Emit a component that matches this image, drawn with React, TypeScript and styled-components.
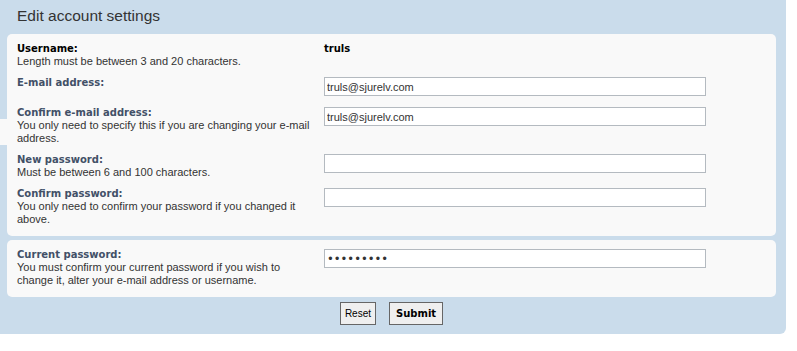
import styled, { createGlobalStyle } from 'styled-components';

const GlobalStyle = createGlobalStyle`
  body {
    margin: 0;
    background: #fff;
  }
`;

const Panel = styled.form`
  box-sizing: border-box;
  width: 786px;
  padding: 7px 10px 9px 7px;
  background: #cadceb;
  border-radius: 0 0 6px 0;
`;

const Title = styled.h2`
  margin: 0 0 9px;
  padding-left: 10px;
  font-family: 'Liberation Sans', Arial, sans-serif;
  font-size: 15.5px;
  font-weight: normal;
  line-height: 18px;
  color: #333;
`;

const Fieldset = styled.div<{ $top?: number }>`
  display: grid;
  row-gap: 9px;
  margin-top: ${(p) => p.$top ?? 0}px;
  padding: 9px 10px 10px;
  background: #f9f9f9;
  border-radius: 5px;
`;

const Row = styled.div`
  display: grid;
  grid-template-columns: 307px 1fr;
  align-items: start;
`;

const Term = styled.div`
  display: flex;
  flex-direction: column;
  max-width: 298px;
`;

const Label = styled.label<{ $plain?: boolean }>`
  font-family: 'DejaVu Sans', Verdana, sans-serif;
  font-size: 10px;
  font-weight: bold;
  line-height: 12px;
  color: ${(p) => (p.$plain ? '#000' : '#425067')};
`;

const Hint = styled.span<{ $bleed?: boolean }>`
  display: block;
  font-family: 'Liberation Sans', Arial, sans-serif;
  font-size: 11px;
  line-height: 13px;
  color: #333;
  ${(p) =>
    p.$bleed &&
    `
    margin-left: -17px;
    padding-left: 17px;
    background: #f9f9f9;
  `}
`;

const Value = styled.strong`
  font-family: 'DejaVu Sans', Verdana, sans-serif;
  font-size: 10px;
  line-height: 12px;
  color: #000;
`;

const Input = styled.input`
  box-sizing: border-box;
  display: block;
  width: 382px;
  height: 19px;
  margin: 0 0 2px;
  padding: 0 2px;
  border: 1px solid #b4bac0;
  background: #fff;
  font-family: 'Liberation Sans', Arial, sans-serif;
  font-size: 11px;
  color: #333;
  outline: none;

  &[type='password'] {
    font-family: 'DejaVu Sans', sans-serif;
    font-size: 11.5px;
  }
`;

const Buttons = styled.div`
  display: flex;
  justify-content: center;
  gap: 13px;
  margin-top: 5px;
`;

const Button = styled.button<{ $primary?: boolean }>`
  height: 23px;
  padding: 0 ${(p) => (p.$primary ? 6 : 4)}px;
  border: 1px solid #666;
  border-radius: 0;
  background: #efefef;
  color: #000;
  font-family: ${(p) =>
    p.$primary ? "'DejaVu Sans', Verdana, sans-serif" : "'Liberation Sans', Arial, sans-serif"};
  font-size: 10px;
  font-weight: ${(p) => (p.$primary ? 'bold' : 'normal')};
  cursor: pointer;
`;

export default function App() {
  return (
    <>
      <GlobalStyle />
      <Panel onSubmit={(e) => e.preventDefault()}>
        <Title>Edit account settings</Title>

        <Fieldset>
          <Row>
            <Term>
              <Label $plain>Username:</Label>
              <Hint>Length must be between 3 and 20 characters.</Hint>
            </Term>
            <Value>truls</Value>
          </Row>
          <Row>
            <Term>
              <Label htmlFor='email'>E-mail address:</Label>
            </Term>
            <Input id='email' type='text' defaultValue='truls@sjurelv.com' />
          </Row>
          <Row>
            <Term>
              <Label htmlFor='email_confirm'>Confirm e-mail address:</Label>
              <Hint $bleed>
                You only need to specify this if you are changing your e-mail
                address.
              </Hint>
            </Term>
            <Input
              id='email_confirm'
              type='text'
              defaultValue='truls@sjurelv.com'
            />
          </Row>
          <Row>
            <Term>
              <Label htmlFor='new_password'>New password:</Label>
              <Hint>Must be between 6 and 100 characters.</Hint>
            </Term>
            <Input id='new_password' type='password' />
          </Row>
          <Row>
            <Term>
              <Label htmlFor='password_confirm'>Confirm password:</Label>
              <Hint>
                You only need to confirm your password if you changed it
                above.
              </Hint>
            </Term>
            <Input id='password_confirm' type='password' />
          </Row>
        </Fieldset>

        <Fieldset $top={4}>
          <Row>
            <Term>
              <Label htmlFor='cur_password'>Current password:</Label>
              <Hint>
                You must confirm your current password if you wish to change
                it, alter your e-mail address or username.
              </Hint>
            </Term>
            <Input id='cur_password' type='password' defaultValue='123456789' />
          </Row>
        </Fieldset>

        <Buttons>
          <Button type='reset'>Reset</Button>
          <Button type='submit' $primary>
            Submit
          </Button>
        </Buttons>
      </Panel>
    </>
  );
}
